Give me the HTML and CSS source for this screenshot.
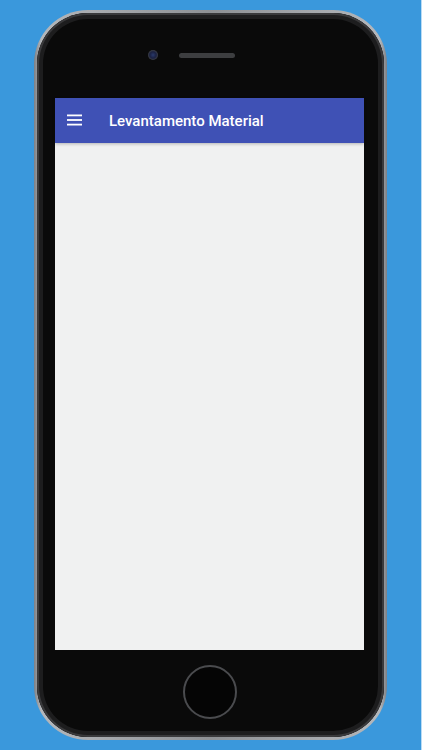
FILE: index.html
```html
<!DOCTYPE html>
<html>
<head>
<meta charset="utf-8">
<link rel="stylesheet" href="styles.css">
</head>
<body>
<div class="stage">
  <div class="phone">
    <div class="bezel">
      <div class="top">
        <span class="camera"></span>
        <span class="speaker"></span>
      </div>
      <div class="screen">
        <div class="appbar">
          <svg class="menu" width="15" height="12" viewBox="0 0 15 12">
            <rect x="0" y="0.5" width="15" height="1.8" fill="#fff"/>
            <rect x="0" y="5.1" width="15" height="1.8" fill="#fff"/>
            <rect x="0" y="9.7" width="15" height="1.8" fill="#fff"/>
          </svg>
          <span class="title">Levantamento Material</span>
        </div>
        <div class="content"></div>
      </div>
      <div class="bottom">
        <span class="home"></span>
      </div>
    </div>
  </div>
</div>
</body>
</html>
```
FILE: styles.css
```css
html, body {
  margin: 0;
  padding: 0;
}
body {
  width: 422px;
  height: 750px;
  background: #3a98dc;
  overflow: hidden;
}
.stage {
  width: 422px;
  height: 750px;
  border-right: 1px solid #b9dbf4;
  padding: 10px 0 0 34px;
  box-sizing: border-box;
}
.phone {
  width: 353px;
  height: 730px;
  border-radius: 54px;
  background: linear-gradient(90deg, #7d8085 0%, #b4b7bb 2%, #8e9195 50%, #b4b7bb 98%, #7d8085 100%);
  padding: 3px;
  box-sizing: border-box;
}
.bezel {
  height: 100%;
  border-radius: 51px;
  background: #0a0a0a;
  box-shadow: inset 0 0 0 2px #3a3a3c, inset 0 0 0 6px #1d1d1e;
  display: flex;
  flex-direction: column;
  box-sizing: border-box;
  padding: 0 19px 0 18px;
}
.top {
  height: 85px;
  display: flex;
  align-items: flex-start;
  padding: 37px 0 0 93px;
  box-sizing: border-box;
  gap: 21px;
}
.camera {
  width: 10px;
  height: 10px;
  border-radius: 50%;
  background: radial-gradient(circle at 50% 50%, #2a3a6a 0%, #1a2040 45%, #3c3f46 70%, #1b1b1c 100%);
}
.speaker {
  width: 56px;
  height: 5px;
  margin-top: 3px;
  border-radius: 3px;
  background: #3d3e40;
}
.screen {
  width: 309px;
  height: 552px;
  display: flex;
  flex-direction: column;
  background: #f0f1f1;
}
.appbar {
  height: 45px;
  background: #3f51b5;
  display: flex;
  align-items: center;
  padding-left: 12px;
  box-shadow: 0 1px 3px rgba(0,0,0,0.25);
  position: relative;
  z-index: 1;
}
.menu {
  display: block;
  margin-top: -1px;
}
.title {
  margin-left: 27px;
  color: #fff;
  font-family: Roboto, "Liberation Sans", sans-serif;
  font-weight: 500;
  font-size: 15px;
  letter-spacing: 0;
}
.content {
  flex: 1;
  background: #f0f1f1;
}
.bottom {
  flex: 1;
  display: flex;
  justify-content: center;
  padding-top: 15px;
  box-sizing: border-box;
}
.home {
  width: 54px;
  height: 54px;
  border-radius: 50%;
  box-sizing: border-box;
  border: 2px solid #4a4b4e;
  background: #050505;
}
```
